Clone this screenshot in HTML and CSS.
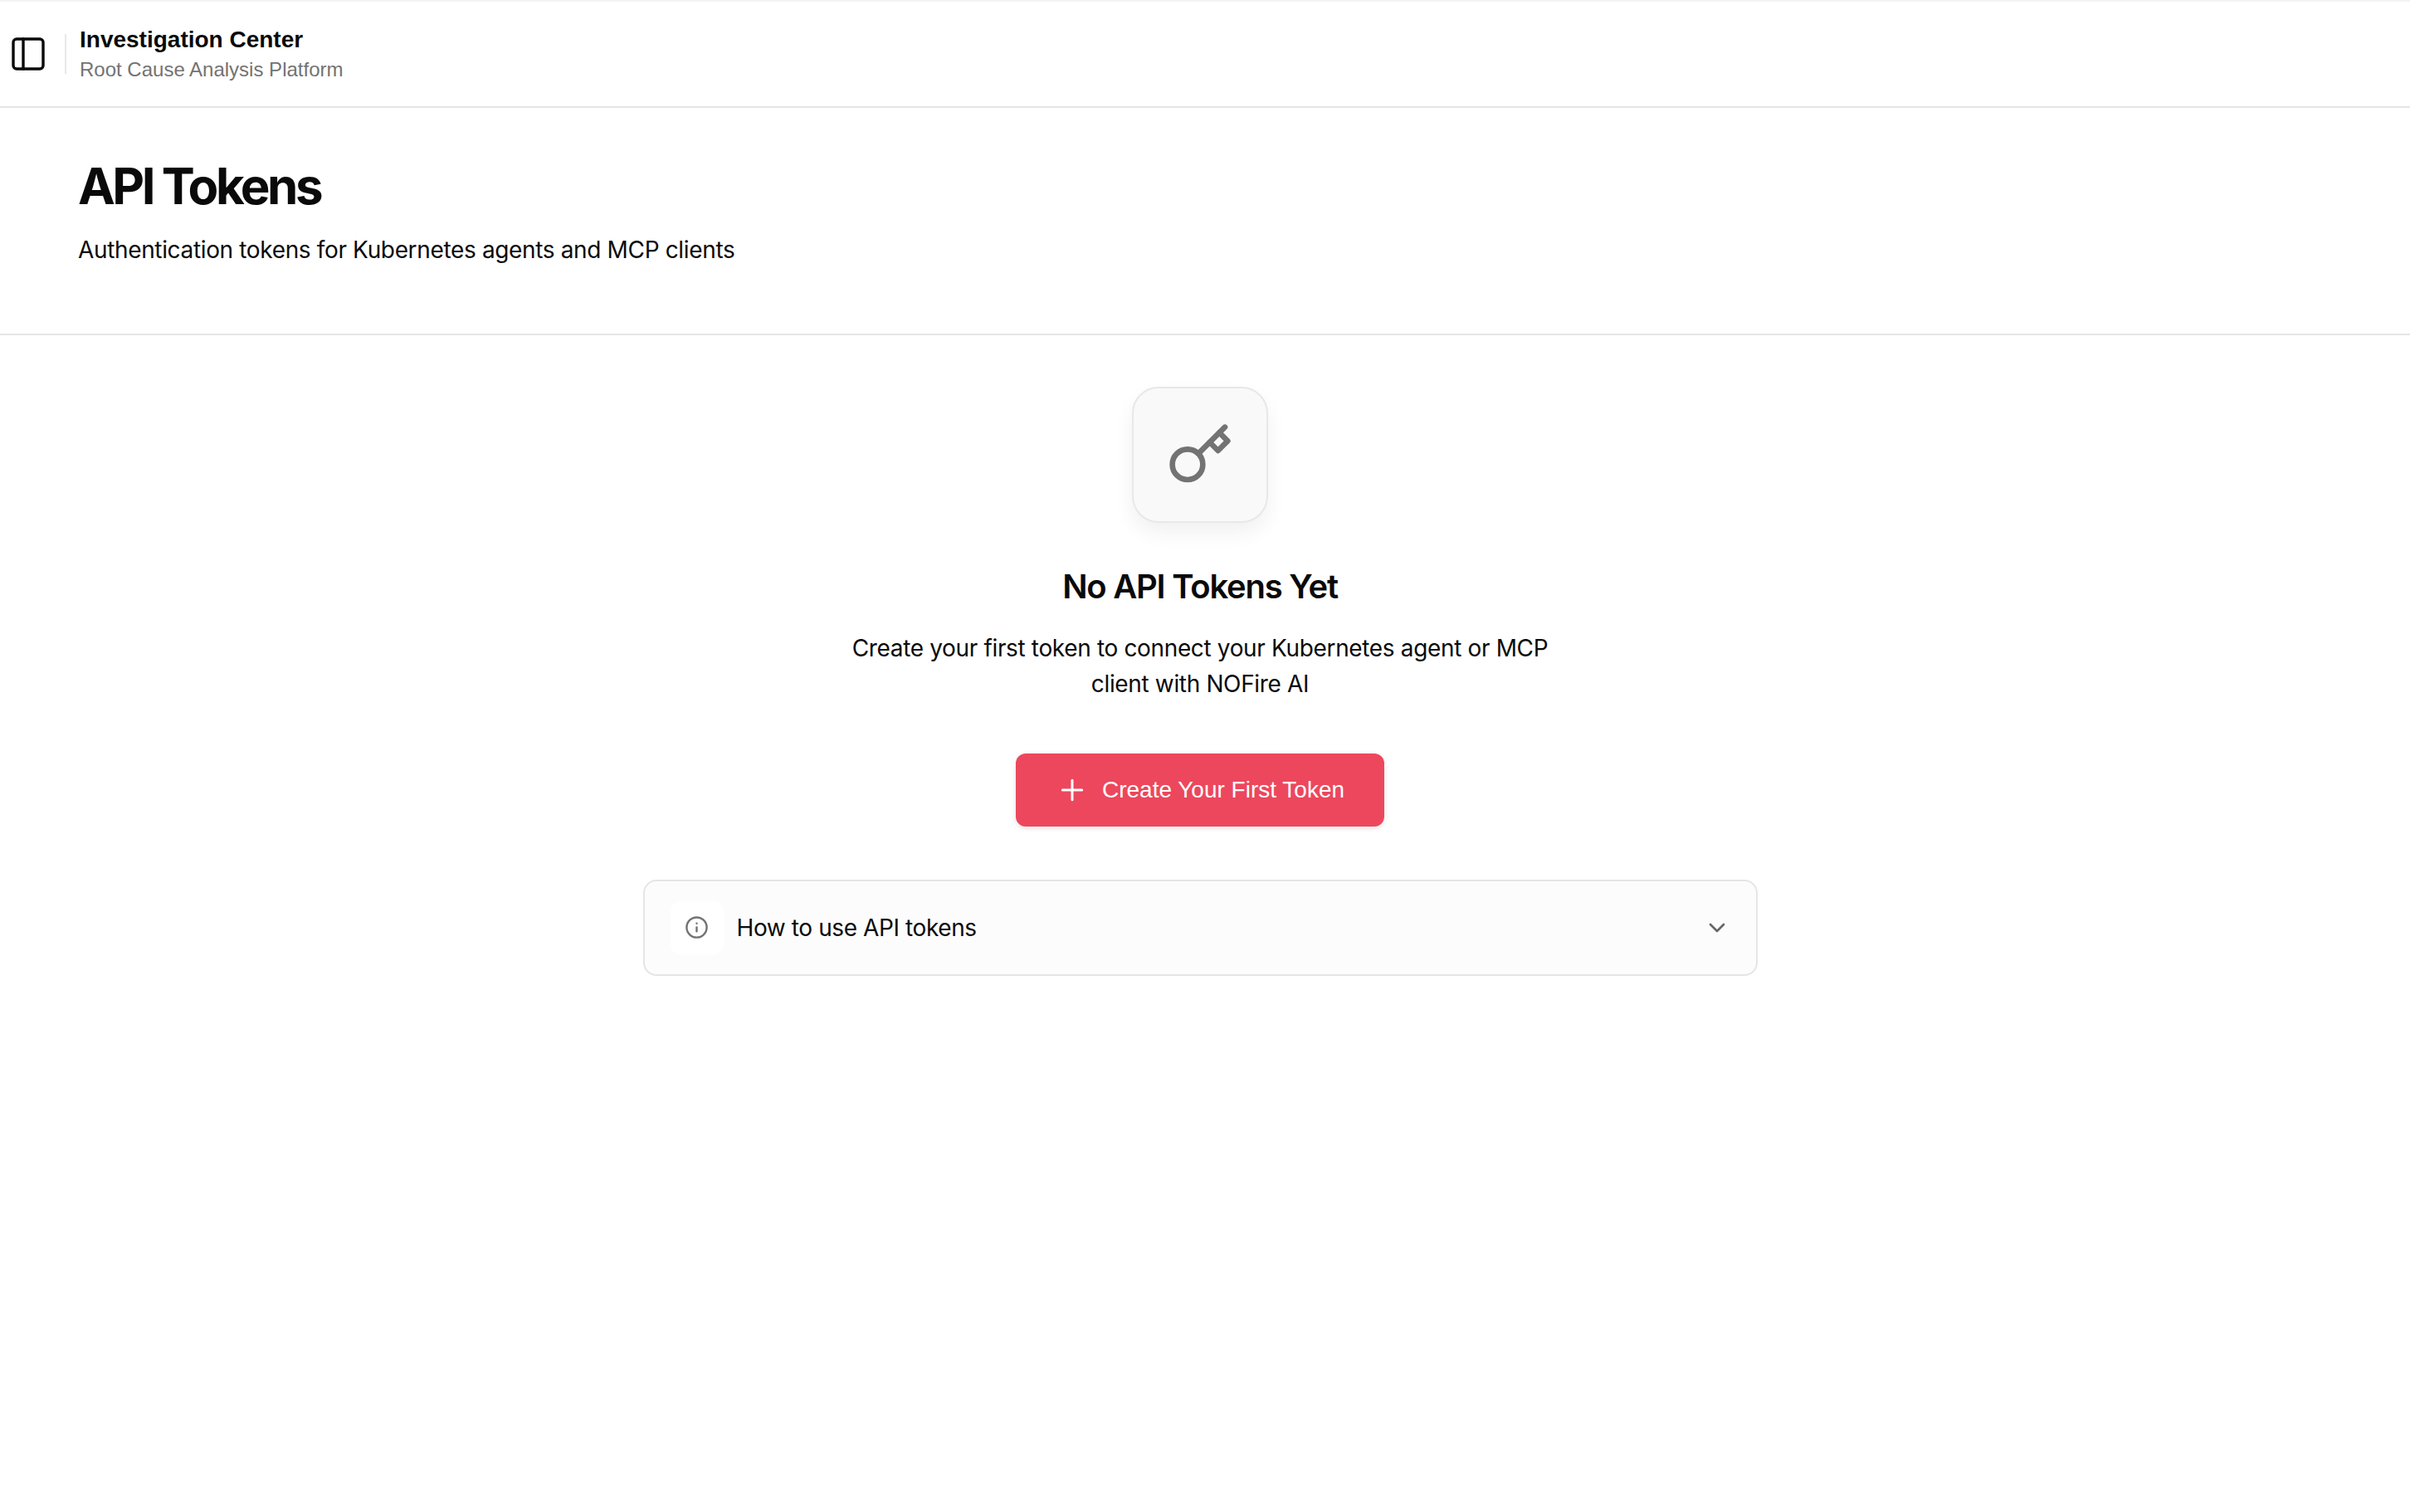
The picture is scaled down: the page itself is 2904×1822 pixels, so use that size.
FILE: index.html
```html
<!DOCTYPE html>
<html lang="en">
<head>
  <meta charset="UTF-8">
  <title>API Tokens</title>
  <link rel="stylesheet" href="styles.css">
</head>
<body>

  <header class="topbar">
    <button class="sidebar-toggle" aria-label="Toggle sidebar">
      <svg width="48" height="48" viewBox="0 0 24 24" fill="none" stroke="#0a0a0a" stroke-width="1.7" stroke-linecap="round" stroke-linejoin="round">
        <rect x="3" y="3" width="18" height="18" rx="2"></rect>
        <path d="M9 3v18"></path>
      </svg>
    </button>
    <div class="topbar-divider"></div>
    <div class="topbar-text">
      <div class="topbar-title">Investigation Center</div>
      <div class="topbar-sub">Root Cause Analysis Platform</div>
    </div>
  </header>

  <section class="page-head">
    <h1>API Tokens</h1>
    <p>Authentication tokens for Kubernetes agents and MCP clients</p>
  </section>

  <main class="empty">
    <div class="empty-icon">
      <svg width="80" height="80" viewBox="0 0 24 24" fill="none" stroke="#737373" stroke-width="2" stroke-linecap="round" stroke-linejoin="round">
        <circle cx="7.5" cy="15.5" r="5.5"></circle>
        <path d="m21 2-9.6 9.6"></path>
        <path d="m15.5 7.5 3 3L22 7l-3-3"></path>
      </svg>
    </div>
    <h2>No API Tokens Yet</h2>
    <p class="empty-text">Create your first token to connect your Kubernetes agent or MCP client with NOFire AI</p>
    <button class="create-btn">
      <svg width="40" height="40" viewBox="0 0 24 24" fill="none" stroke="#fff" stroke-width="1.8" stroke-linecap="round" stroke-linejoin="round">
        <path d="M5 12h14"></path>
        <path d="M12 5v14"></path>
      </svg>
      Create Your First Token
    </button>

    <div class="howto">
      <div class="howto-left">
        <span class="howto-icon">
          <svg width="29" height="29" viewBox="0 0 24 24" fill="none" stroke="#737373" stroke-width="2" stroke-linecap="round" stroke-linejoin="round">
            <circle cx="12" cy="12" r="10"></circle>
            <path d="M12 16v-4"></path>
            <path d="M12 8h.01"></path>
          </svg>
        </span>
        <span class="howto-label">How to use API tokens</span>
      </div>
      <svg width="32" height="32" viewBox="0 0 24 24" fill="none" stroke="#666" stroke-width="2" stroke-linecap="round" stroke-linejoin="round">
        <path d="m6 9 6 6 6-6"></path>
      </svg>
    </div>
  </main>

</body>
</html>
```

FILE: styles.css
```css
body {
  margin: 0;
  font-family: 'Inter', sans-serif;
  background: #fff;
  color: #0a0a0a;
}

.topbar {
  display: flex;
  align-items: center;
  height: 126px;
  border-top: 2px solid #f3f3f3;
  border-bottom: 2px solid #e5e5e5;
  padding-left: 10px;
}

.sidebar-toggle {
  display: flex;
  padding: 0;
  border: none;
  background: none;
}

.topbar-divider {
  width: 2px;
  height: 48px;
  margin-left: 20px;
  margin-right: 16px;
  background: #e8e8e8;
}

.topbar-text {
  margin-top: 2px;
}

.topbar-title {
  font-family: 'Liberation Sans', sans-serif;
  font-size: 28px;
  font-weight: bold;
  line-height: 36px;
}

.topbar-sub {
  font-family: 'Liberation Sans', sans-serif;
  font-size: 24px;
  line-height: 36px;
  color: #737373;
}

.page-head {
  height: 274px;
  box-sizing: border-box;
  padding: 58px 94px 0;
  border-bottom: 2px solid #e5e5e5;
}

h1 {
  margin: 0;
  font-size: 60px;
  font-weight: 700;
  line-height: 72px;
  letter-spacing: -3.5px;
}

.page-head p {
  margin: 20px 0 0;
  font-size: 28px;
  line-height: 42px;
  letter-spacing: -0.35px;
}

.empty {
  display: flex;
  flex-direction: column;
  align-items: center;
  padding: 62px 12px 0 0;
}

.empty-icon {
  display: flex;
  align-items: center;
  justify-content: center;
  width: 164px;
  height: 164px;
  box-sizing: border-box;
  background: #f9f9f9;
  border: 2px solid #e8e8e8;
  border-radius: 32px;
  box-shadow: 0 12px 24px rgba(0,0,0,0.06);
}

h2 {
  margin: 49px 0 0;
  font-size: 40px;
  font-weight: 600;
  line-height: 56px;
  letter-spacing: -1.25px;
}

.empty-text {
  width: 880px;
  margin: 25px 0 0;
  font-size: 28px;
  line-height: 42.5px;
  letter-spacing: -0.35px;
  text-align: center;
}

.create-btn {
  display: flex;
  align-items: center;
  justify-content: center;
  gap: 16px;
  width: 444px;
  height: 88px;
  margin-top: 62.5px;
  border: none;
  border-radius: 12px;
  background: #ec475d;
  color: #fff;
  font-family: 'Liberation Sans', sans-serif;
  font-size: 28px;
  box-shadow: 0 2px 6px rgba(0,0,0,0.12);
}

.howto {
  display: flex;
  align-items: center;
  justify-content: space-between;
  width: 1343px;
  height: 116px;
  margin-top: 64px;
  box-sizing: border-box;
  padding: 0 31px;
  background: #fcfcfc;
  border: 2px solid #e5e5e5;
  border-radius: 16px;
}

.howto-left {
  display: flex;
  align-items: center;
  gap: 16px;
}

.howto-icon {
  display: flex;
  align-items: center;
  justify-content: center;
  width: 64px;
  height: 64px;
  background: #fff;
  border-radius: 12px;
}

.howto-label {
  font-size: 28px;
  letter-spacing: -0.4px;
}
```
